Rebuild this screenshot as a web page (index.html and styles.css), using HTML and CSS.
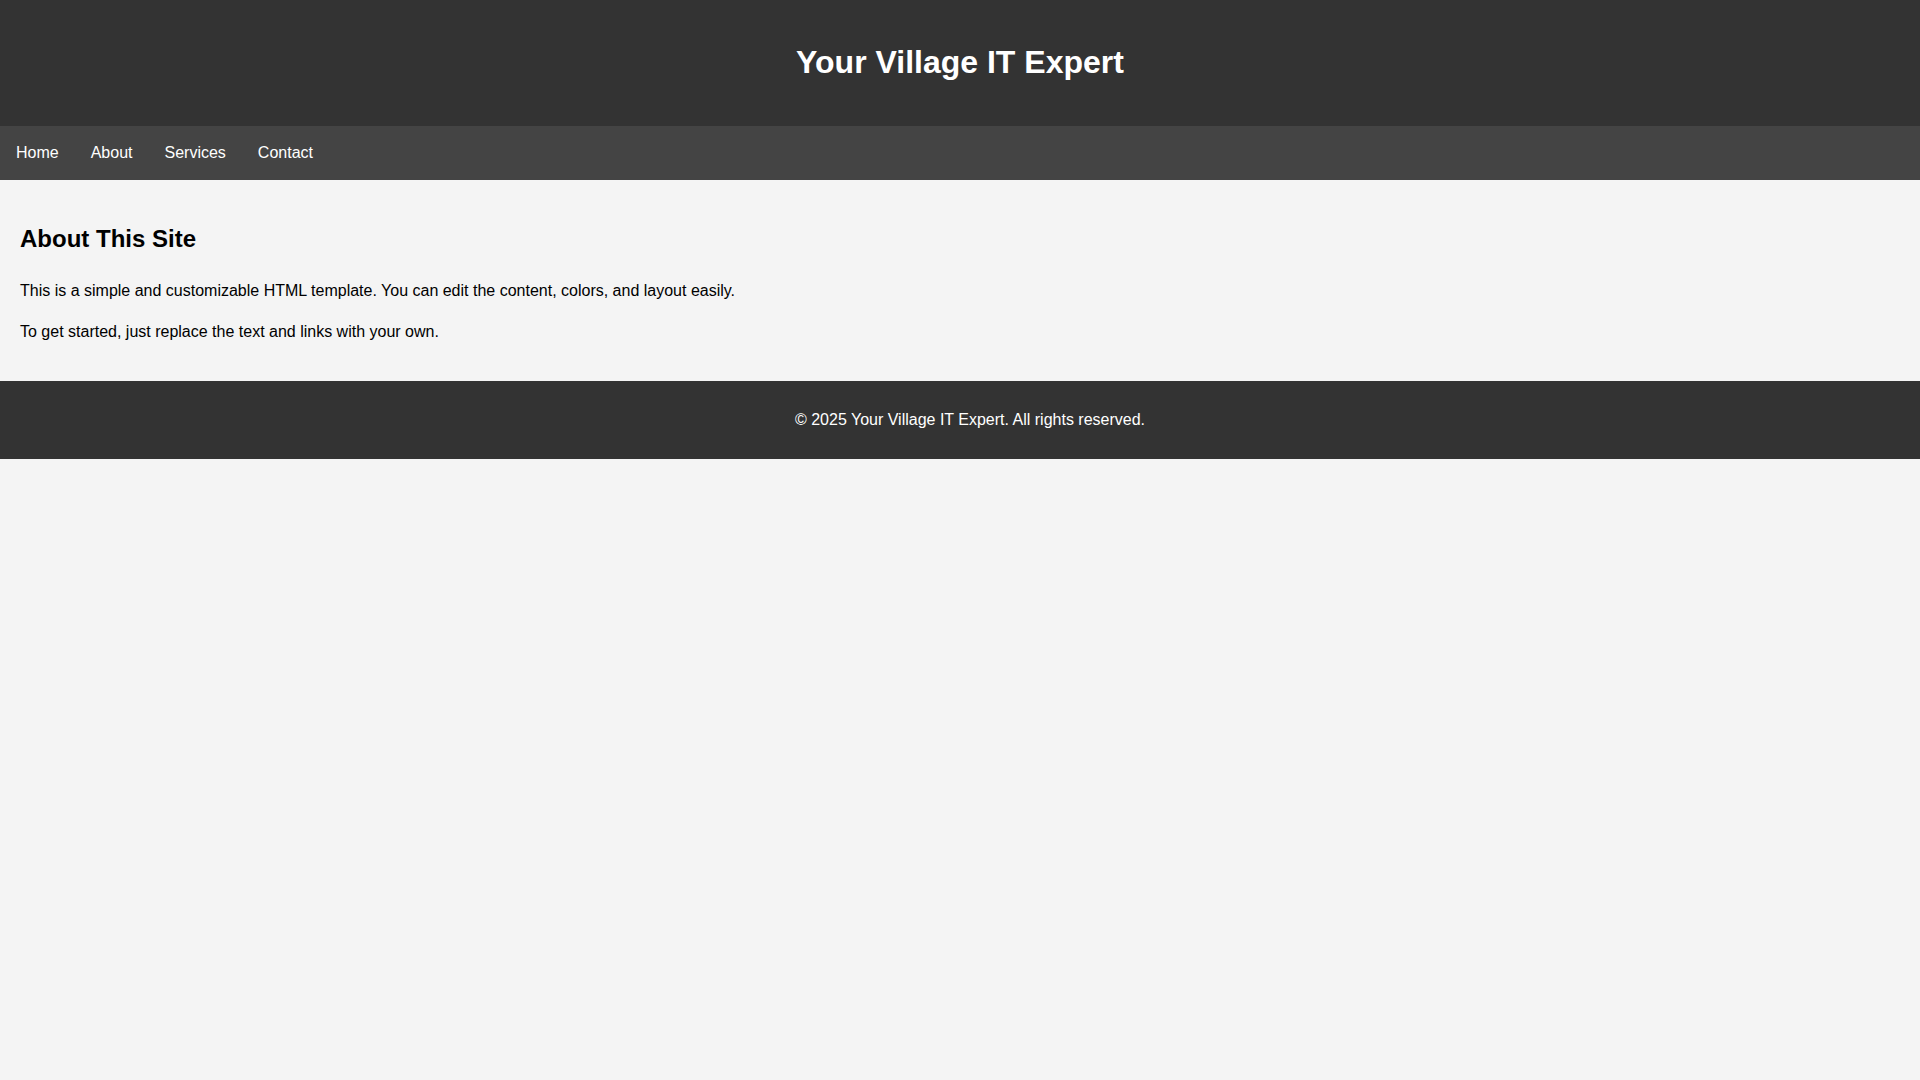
FILE: index.html
```html
<!DOCTYPE html>
<html lang="en">
<head>
<meta charset="UTF-8">
<title>Your Village IT Expert</title>
<link rel="stylesheet" href="styles.css">
</head>
<body>
<header class="site-header">
  <h1 class="site-title">Your Village IT Expert</h1>
</header>
<nav class="site-nav">
  <a href="#" class="nav-link">Home</a>
  <a href="#" class="nav-link">About</a>
  <a href="#" class="nav-link">Services</a>
  <a href="#" class="nav-link">Contact</a>
</nav>
<main class="content">
  <h2 class="content-title">About This Site</h2>
  <p>This is a simple and customizable HTML template. You can edit the content, colors, and layout easily.</p>
  <p>To get started, just replace the text and links with your own.</p>
</main>
<footer class="site-footer">
  <p>&copy; 2025 Your Village IT Expert. All rights reserved.</p>
</footer>
</body>
</html>
```

FILE: styles.css
```css
body {
  margin: 0;
  font-family: "Liberation Sans", Arial, sans-serif;
  line-height: 1.6;
  background: #f4f4f4;
  color: #000;
}

.site-header {
  background: #333;
  color: #fff;
  padding: 16px 0;
  text-align: center;
}

.site-title {
  font-size: 32px;
  margin: 21.44px 0;
}

.site-nav {
  display: flex;
  background: #444;
}

.nav-link {
  display: block;
  color: #fff;
  text-decoration: none;
  padding: 14px 16px;
}

.content {
  padding: 20px;
}

.content-title {
  font-size: 24px;
  margin: 19.92px 0;
}

.site-footer {
  background: #333;
  color: #fff;
  text-align: center;
  padding: 10px;
  width: 100%;
}
```
